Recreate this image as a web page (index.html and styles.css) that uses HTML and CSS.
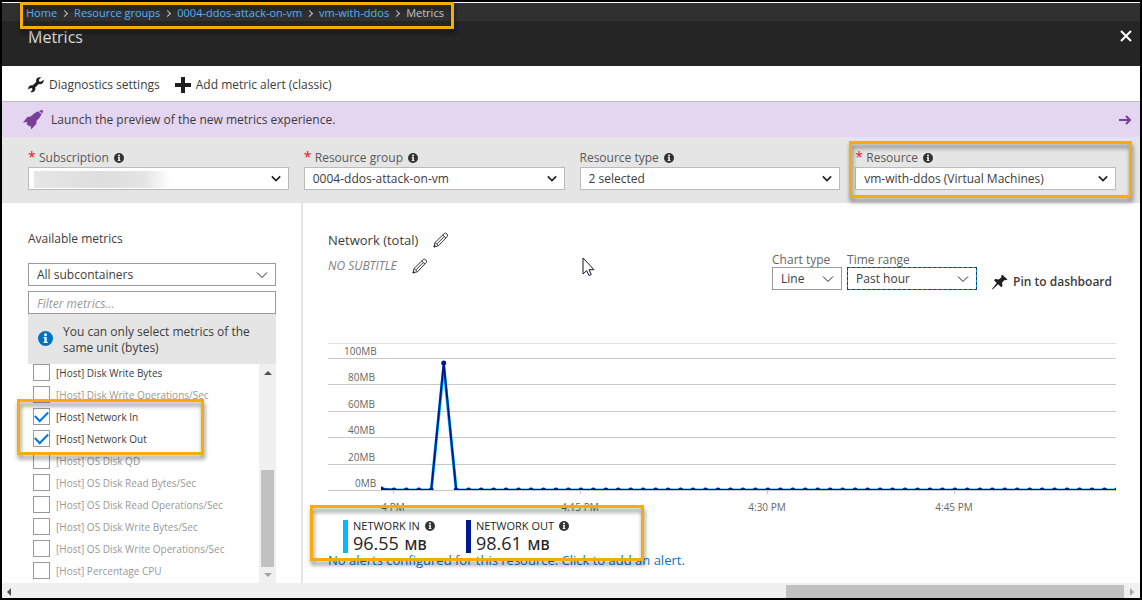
FILE: index.html
```html
<!DOCTYPE html>
<html lang="en">
<head>
<meta charset="utf-8">
<meta name="viewport" content="width=device-width, initial-scale=1">
<title>Metrics</title>
<link rel="stylesheet" href="styles.css">
</head>
<body>
<svg class="defs" aria-hidden="true">
  <symbol id="info" viewBox="0 0 10 10"><circle cx="5" cy="5" r="5" fill="currentColor"/><circle cx="5" cy="2.5" r="1" fill="#fff"/><path d="M3.8 4h2v3.2h.7V8H3.7v-.8h.6V4.8h-.5z" fill="#fff"/></symbol>
  <symbol id="chevron" viewBox="0 0 12 8"><path d="M1 1.5l5 5 5-5" fill="none" stroke="currentColor"/></symbol>
  <symbol id="pencil" viewBox="0 0 16 16"><path d="M1 15l1-4.5L11.200 1.600q1.200-1.100 2.600.2t.4 2.700L5.500 13.700zM2 10.500l3.500 3.200M9.800 3l3.200 3.200M4 11.800l7-7M1 15l1.800-.6-1.200-1z" fill="none" stroke="currentColor"/></symbol>
</svg>

<div class="topbar">
  <nav class="breadcrumb marked" aria-label="Breadcrumb">
    <a href="#">Home</a><span class="sep"></span>
    <a href="#">Resource groups</a><span class="sep"></span>
    <a href="#">0004-ddos-attack-on-vm</a><span class="sep"></span>
    <a href="#">vm-with-ddos</a><span class="sep"></span>
    <span>Metrics</span>
  </nav>
</div>

<header class="header">
  <h1>Metrics</h1>
  <button class="close" aria-label="Close"><svg width="12" height="12" viewBox="0 0 12 12"><path d="M1 1l10 10M11 1L1 11" stroke="currentColor" stroke-width="2"/></svg></button>
</header>

<div class="toolbar">
  <button><svg width="16" height="16" viewBox="0 0 16 16"><path d="M15.600 2.700L13 4.800l-1.800-.4-.4-1.700L13.200.4Q10.500-.4 8.800 1.500 7.700 3 8.200 4.900L4.700 8.300Q2.200 7.700.9 9.400-.2 11 .4 12.600l2-1.700 1.600.4.500 1.700-2.200 2q2.400.9 4.100-.8 1.400-1.600.8-3.700l3.600-3.400q2.500.6 4-1.100 1.300-1.500.8-3.300z" fill="#1f1f1f"/></svg>Diagnostics settings</button>
  <button><svg width="16" height="16" viewBox="0 0 16 16"><path d="M6 0h4v6h6v4h-6v6H6v-6H0V6h6z" fill="#1f1f1f"/></svg>Add metric alert (classic)</button>
</div>

<a class="banner" href="#">
  <svg width="20" height="20" viewBox="0 0 20 20"><path d="M20 0q0 1.800-.7 3.500L16 .9Q18 0 20 0zM15 1.300l3.600 3q-1.400 3.200-5.200 6.700l.2 2.500L8.200 19.500 7.400 15.500 6 16.300l-2.500-2.600 1-1.700L0 12.500 4.400 7l3.200-.4Q11 2.800 15 1.300z" fill="#7a3f98"/></svg>
  <span>Launch the preview of the new metrics experience.</span>
  <svg class="go" width="12" height="10" viewBox="0 0 12 10"><path d="M0 5h11M7 1l4 4-4 4" fill="none" stroke="#7a3f98" stroke-width="2"/></svg>
</a>

<form class="filters">
  <div class="field">
    <label for="sub"><i class="req">*</i>Subscription<svg class="info"><use href="#info"/></svg></label>
    <div class="select bold"><select id="sub"><option></option></select><span class="smear"></span><svg><use href="#chevron"/></svg></div>
  </div>
  <div class="field">
    <label for="grp"><i class="req">*</i>Resource group<svg class="info"><use href="#info"/></svg></label>
    <div class="select bold"><select id="grp"><option>0004-ddos-attack-on-vm</option></select><svg><use href="#chevron"/></svg></div>
  </div>
  <div class="field">
    <label for="type">Resource type<svg class="info"><use href="#info"/></svg></label>
    <div class="select bold"><select id="type"><option>2 selected</option></select><svg><use href="#chevron"/></svg></div>
  </div>
  <div class="field marked">
    <label for="res"><i class="req">*</i>Resource<svg class="info"><use href="#info"/></svg></label>
    <div class="select bold"><select id="res"><option>vm-with-ddos (Virtual Machines)</option></select><svg><use href="#chevron"/></svg></div>
  </div>
</form>

<main class="panels">
  <section class="metrics">
    <h2><label for="container">Available metrics</label></h2>
    <div class="select"><select id="container"><option>All subcontainers</option></select><svg><use href="#chevron"/></svg></div>
    <input class="search" type="text" placeholder="Filter metrics..." aria-label="Filter metrics">
    <p class="notice"><svg class="notice-icon"><use href="#info"/></svg>You can only select metrics of the same unit (bytes)</p>
    <div class="listbox">
      <div class="list">
        <label><input type="checkbox">[Host] Disk Write Bytes</label>
        <label class="off"><input type="checkbox" disabled>[Host] Disk Write Operations/Sec</label>
        <div class="pair marked">
          <label><input type="checkbox" checked>[Host] Network In</label>
          <label><input type="checkbox" checked>[Host] Network Out</label>
        </div>
        <label class="off"><input type="checkbox" disabled>[Host] OS Disk QD</label>
        <label class="off"><input type="checkbox" disabled>[Host] OS Disk Read Bytes/Sec</label>
        <label class="off"><input type="checkbox" disabled>[Host] OS Disk Read Operations/Sec</label>
        <label class="off"><input type="checkbox" disabled>[Host] OS Disk Write Bytes/Sec</label>
        <label class="off"><input type="checkbox" disabled>[Host] OS Disk Write Operations/Sec</label>
        <label class="off"><input type="checkbox" disabled>[Host] Percentage CPU</label>
      </div>
      <div class="vscroll" aria-hidden="true">
        <svg width="8" height="4" viewBox="0 0 8 4"><path d="M0 4l4-4 4 4z" fill="#505050"/></svg>
        <span class="thumb"></span>
        <svg width="8" height="4" viewBox="0 0 8 4"><path d="M0 0l4 4 4-4z" fill="#a3a3a3"/></svg>
      </div>
    </div>
  </section>

  <section class="chart-panel">
    <div class="chart-head">
      <div class="titles">
        <h2>Network (total) <button aria-label="Edit title"><svg><use href="#pencil"/></svg></button></h2>
        <p>NO SUBTITLE <button aria-label="Edit subtitle"><svg><use href="#pencil"/></svg></button></p>
      </div>
      <div class="controls">
        <div class="control line"><label for="ct">Chart type</label><div class="select"><select id="ct"><option>Line</option></select><svg><use href="#chevron"/></svg></div></div>
        <div class="control range"><label for="tr">Time range</label><div class="select"><select id="tr"><option>Past hour</option></select><svg><use href="#chevron"/></svg></div></div>
        <button class="pin"><svg width="16" height="16" viewBox="0 0 16 16"><path d="M10 .5l5.500 5-1.600.8-1.400-.4-2.500 2.800.5 3.300-1.200 1.200-3.200-3L.5 15.500 0 15l4.700-6L2 6.200 3.200 5l3.500.4L9.500 3.200 9.200 2z" fill="#1f1f1f"/></svg>Pin to dashboard</button>
      </div>
    </div>

    <div class="chart">
      <div class="grid">
        <div>100MB</div><div>80MB</div><div>60MB</div><div>40MB</div><div>20MB</div><div>0MB</div>
      </div>
      <svg class="plot" viewBox="0 0 788 151" preserveAspectRatio="none" role="img" aria-label="Network in and out over the past hour">
        <clipPath id="area"><rect x="53" y="0" width="735" height="147"/></clipPath>
        <g class="ticks"></g>
        <g class="series" clip-path="url(#area)"></g>
      </svg>
    </div>
    <div class="axis"><span>4 PM</span><span>4:15 PM</span><span>4:30 PM</span><span>4:45 PM</span></div>

    <div class="legend marked">
      <div class="item in"><span>NETWORK IN<svg class="info"><use href="#info"/></svg></span><strong>96.55 <small>MB</small></strong></div>
      <div class="item out"><span>NETWORK OUT<svg class="info"><use href="#info"/></svg></span><strong>98.61 <small>MB</small></strong></div>
    </div>
    <a class="alerts" href="#">No alerts configured for this resource. Click to add an alert.</a>
    <svg class="cursor" width="13" height="20" viewBox="0 0 13 20" aria-hidden="true"><path d="M1 1v16l3.600-3.400 2.400 5 2.300-1.100L7 12.700h5z" fill="#fff" stroke="#15152d"/></svg>
  </section>
</main>

<div class="hscroll" aria-hidden="true">
  <svg width="4" height="8" viewBox="0 0 4 8"><path d="M4 0L0 4l4 4z" fill="#505050"/></svg>
  <span class="thumb"></span>
  <svg width="4" height="8" viewBox="0 0 4 8"><path d="M0 0l4 4-4 4z" fill="#a3a3a3"/></svg>
</div>
<script src="chart.js"></script>
</body>
</html>
```
FILE: styles.css
```css
* { box-sizing: border-box; }
body {
  margin: 0; min-height: 100vh; display: flex; flex-direction: column;
  border: 2px solid #000; background: #fff; color: #3c3c3c;
  font: 12px/16px "Open Sans", "Noto Sans", sans-serif;
}
h1, h2, p { margin: 0; font-weight: 400; }
button, input, select { font: inherit; color: inherit; }
button { padding: 0; border: 0; background: none; }
svg { flex: none; display: block; }
a { text-decoration: none; }
.defs { position: absolute; width: 0; height: 0; }

/* highlight frames */
.marked { position: relative; }
.marked::after {
  content: ""; position: absolute; z-index: 2; pointer-events: none;
  border: 3px solid #faab0c; filter: drop-shadow(1px 4px 2px rgba(0, 0, 0, .45));
}
.breadcrumb::after { inset: -1px -10px -8px -6px; }
.field.marked::after { inset: -8px -16px -8px -6px; }
.pair.marked::after { inset: -9px -26px -8px -16px; }
.legend::after { inset: -15px -75px -8px -33px; }

.topbar { height: 19px; border-top: 1px solid #fff; background: #303030; padding-left: 24px; }
.breadcrumb {
  display: flex; align-items: center; width: max-content; height: 18px;
  padding-top: 2px; font-size: 11px; color: #c8c8c8;
}
.breadcrumb a { color: #55b3ff; }
.sep { width: 5px; height: 5px; margin: 0 7px 0 5px; border: solid #c8c8c8; border-width: 1px 1px 0 0; transform: rotate(45deg); }

.header {
  display: flex; justify-content: space-between; align-items: flex-start;
  height: 45px; padding: 4px 8px 0 26px; background: #252525; color: #ddd;
}
h1 { font-size: 16px; line-height: 24px; }
.close { margin-top: 5px; color: #fff; }

.toolbar { display: flex; gap: 15px; height: 36px; padding: 2px 26px 0; border-bottom: 1px solid #bbb; }
.toolbar button { display: flex; align-items: center; gap: 5px; }

.banner { display: flex; align-items: center; gap: 8px; height: 35px; padding: 0 9px 0 21px; background: #e4d5f0; color: inherit; }
.banner .go { margin-left: auto; }

.filters { display: grid; grid-template-columns: repeat(4, minmax(0, 1fr)); gap: 15px; padding: 12px 24px 13px 26px; background: #e5e5e5; }
.field label { display: flex; align-items: center; height: 18px; color: #595959; }
.req { align-self: flex-start; width: 11px; color: #e81123; font-size: 14px; font-style: normal; }
.info { width: 10px; height: 10px; margin-left: 5px; color: #333; }

.select { position: relative; height: 23px; }
.select select {
  appearance: none; display: block; width: 100%; height: 100%; margin: 0; padding: 1px 24px 0 8px;
  border: 1px solid #999; border-radius: 0; background: #fff;
}
.select svg { position: absolute; right: 8px; top: 8px; width: 12px; height: 8px; color: #222; pointer-events: none; }
.select.bold select { border-color: #bababa; }
.select.bold svg { width: 10px; height: 7px; stroke-width: 2px; color: #1f1f1f; }
.smear { position: absolute; inset: 4px 45% 2px 6px; background: linear-gradient(90deg, #e6e6e6, #dedede 50%, #e4e4e4 80%, #fff); }

.panels { flex: 1; display: flex; }
.metrics { width: 301px; padding: 27px 25px 0 26px; border-right: 2px solid #e5e5e5; display: flex; flex-direction: column; }
.metrics h2 { margin-bottom: 15px; font-size: 12px; line-height: 18px; }
.search { height: 23px; margin-top: 5px; padding: 1px 8px 0; border: 1px solid #999; width: 100%; }
.search::placeholder { color: #999; font-style: italic; }
.notice { display: flex; align-items: flex-start; gap: 10px; padding: 10px 20px 8px 10px; background: #e5e5e5; }
.notice-icon { width: 15px; height: 15px; margin-top: 7px; color: #0072c6; }
.listbox { flex: 1; display: flex; justify-content: space-between; }
.list { display: flex; flex-direction: column; align-items: flex-start; gap: 5px; padding: 0 0 4px 5px; }
.list label { display: flex; align-items: center; gap: 6px; height: 17px; font-size: 10px; white-space: nowrap; }
.list .off { color: #999; }
.pair { display: flex; flex-direction: column; gap: 5px; width: 145px; }
.list input { appearance: none; width: 17px; height: 17px; margin: 0; border: 1px solid #999; background: #fff; display: grid; place-items: center; }
.list input:checked::before { content: ""; width: 11px; height: 6px; margin-bottom: 3px; border: solid #0078d7; border-width: 0 0 2px 2px; transform: rotate(-45deg); }
.vscroll { width: 17px; padding: 7px 2px 6px; background: #f0f0f0; display: flex; flex-direction: column; align-items: center; }
.thumb { background: #c1c1c1; }
.vscroll .thumb { width: 13px; height: 97px; margin: auto 0 6px; }

.chart-panel { position: relative; flex: 1; min-width: 0; padding: 27px 24px 0 25px; }
.chart-head { display: flex; justify-content: space-between; align-items: flex-start; }
.titles h2, .titles p { display: flex; align-items: center; gap: 15px; }
.titles h2 { font-size: 13px; line-height: 20px; }
.titles p { margin-top: 7px; line-height: 18px; font-style: italic; color: #808080; }
.titles svg { width: 16px; height: 16px; color: #333; }
.controls { display: flex; align-items: flex-end; gap: 5px; padding: 23px 4px 0 0; }
.control label { display: block; line-height: 14px; color: #666; }
.line { width: 70px; }
.range { width: 130px; }
.range .select select { border-color: #00a2ed; outline: 1px dashed #0b3f78; outline-offset: -1px; }
.pin { display: flex; align-items: center; gap: 5px; margin-left: 10px; font-weight: 600; }

.chart { position: relative; margin-top: 53px; height: 148px; color: #666; font-size: 10px; }
.grid { display: flex; flex-direction: column; height: 100%; border-top: 1px solid #e2e2e2; }
.grid div { flex: 1; display: flex; align-items: flex-end; padding-left: 20px; border-bottom: 1px solid #c8c8c8; line-height: 13px; }
.grid div:first-child { flex: 0 0 15px; padding-left: 16px; }
.grid div:last-child { padding-left: 27px; }
.plot { position: absolute; left: 0; top: 0; width: 100%; height: 151px; }
.plot path { fill: none; vector-effect: non-scaling-stroke; }
.plot .tick { stroke: #c8c8c8; stroke-width: 1; }
.plot .series-in { stroke: #00bcf2; stroke-width: 3; }
.plot .series-out { stroke: #00188f; stroke-width: 2; }
.plot .dot { stroke: #00188f; stroke-width: 5; stroke-linecap: round; }
.axis { display: grid; grid-template-columns: 130fr 244fr 130fr 244fr 40fr; padding-top: 9px; font-size: 10px; line-height: 14px; text-align: center; color: #666; }

.legend { display: flex; gap: 31px; width: max-content; margin: 6px 0 0 15px; }
.item { display: flex; flex-direction: column; height: 33px; padding-left: 5px; border-left: 5px solid #00bcf2; color: #262626; }
.item.out { border-color: #00188f; }
.item span { display: flex; align-items: center; font-size: 11px; line-height: 11px; }
.item strong { font-size: 18px; line-height: 24px; font-weight: 400; }
.item small { margin-left: 1px; font-size: 14px; font-weight: 600; }
.alerts { display: block; width: max-content; font-size: 13px; line-height: 14px; color: #0078c8; }
.cursor { position: absolute; left: 279px; top: 54px; }

.hscroll { display: flex; align-items: center; height: 15px; padding: 2px 6px 0 5px; background: #f0f0f0; }
.hscroll .thumb { width: 30%; height: 13px; margin: 0 6px 0 auto; }
```
FILE: chart.js
```js
// Time series for one hour, one sample per minute, starting at 3:59 PM.
const ticks = document.querySelector('.ticks');
const series = document.querySelector('.series');
const step = 187 / 15, first = 53.4, base = 147;
const add = (parent, d, cls) => {
  const p = document.createElementNS('http://www.w3.org/2000/svg', 'path');
  p.setAttribute('d', d);
  p.setAttribute('class', cls);
  parent.append(p);
};
const level = (i, peak) => (i === 5 ? peak : i === 0 ? base - 1 : base);
const line = peak => Array.from({ length: 60 }, (_, i) =>
  (i ? 'L' : 'M') + (first + i * step) + ' ' + level(i, peak)).join('');
[65.5, 252.5, 439.5, 626.5].forEach(x => add(ticks, `M${x} 147V151`, 'tick'));
add(series, line(23), 'series-in');
add(series, line(20), 'series-out');
for (let i = 0; i < 60; i++) {
  add(series, `M${first + i * step} ${level(i, 20)}h.01`, 'dot');
}
```
